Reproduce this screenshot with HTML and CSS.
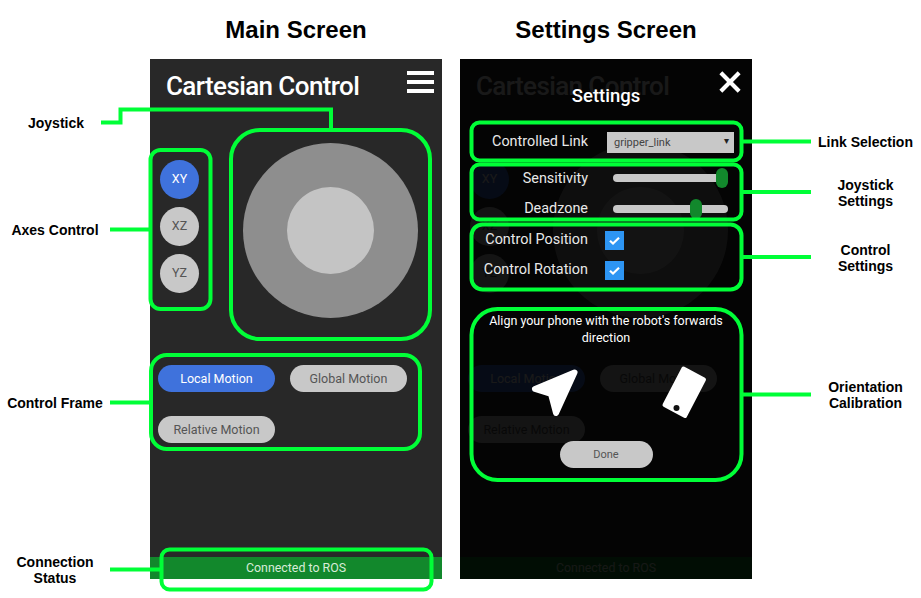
FILE: index.html
```html
<!DOCTYPE html>
<html lang="en">
<head>
<meta charset="UTF-8" />
<title>Cartesian Control screens</title>
<link rel="stylesheet" href="styles.css">
</head>
<body>
<div class="sheet">

  <div class="headings">
    <h1>Main Screen</h1>
    <h1>Settings Screen</h1>
  </div>

  <div class="phones">
    <div class="phone">
      <div class="screen">
        <div class="topbar">
          <div class="app-title">Cartesian Control</div>
          <div class="menu"><span></span><span></span><span></span></div>
        </div>
        <div class="controls">
          <div class="axes">
            <div class="axis active">XY</div>
            <div class="axis">XZ</div>
            <div class="axis">YZ</div>
          </div>
          <div class="stick"><div class="knob"></div></div>
        </div>
        <div class="frames">
          <div class="pill active">Local Motion</div>
          <div class="pill">Global Motion</div>
          <div class="pill">Relative Motion</div>
        </div>
        <div class="status">Connected to ROS</div>
      </div>
    </div>

    <div class="phone">
      <div class="screen">
        <div class="topbar">
          <div class="app-title">Cartesian Control</div>
        </div>
        <div class="controls">
          <div class="axes">
            <div class="axis active">XY</div>
            <div class="axis">XZ</div>
            <div class="axis">YZ</div>
          </div>
          <div class="stick"><div class="knob"></div></div>
        </div>
        <div class="frames">
          <div class="pill active">Local Motion</div>
          <div class="pill">Global Motion</div>
          <div class="pill">Relative Motion</div>
        </div>
        <div class="status">Connected to ROS</div>
      </div>

      <div class="settings">
        <svg class="close" viewBox="0 0 24 24"><path d="M2 2L22 22M22 2L2 22" /></svg>
        <div class="settings-title">Settings</div>

        <div class="row row-link">
          <div class="row-label">Controlled Link</div>
          <div class="select">gripper_link<span class="caret">▾</span></div>
        </div>

        <div class="row row-sens">
          <div class="row-label">Sensitivity</div>
          <div class="slider"><div class="thumb thumb-max"></div></div>
        </div>
        <div class="row row-dead">
          <div class="row-label">Deadzone</div>
          <div class="slider"><div class="thumb thumb-mid"></div></div>
        </div>

        <div class="row row-check">
          <div class="row-label">Control Position</div>
          <svg class="check" viewBox="0 0 19 19"><rect width="19" height="19" fill="#2d95f3" /><path d="M5 9.8L8 12.6L14 6.8" /></svg>
        </div>
        <div class="row row-check">
          <div class="row-label">Control Rotation</div>
          <svg class="check" viewBox="0 0 19 19"><rect width="19" height="19" fill="#2d95f3" /><path d="M5 9.8L8 12.6L14 6.8" /></svg>
        </div>

        <div class="align-text">Align your phone with the robot's forwards direction</div>
        <div class="align-icons">
          <svg class="nav-icon" viewBox="530 365 50 52">
            <path d="M574.500 371.500L535 388L551 393L556 412Z" fill="#fff" stroke="#fff" stroke-width="6" stroke-linejoin="round" />
          </svg>
          <svg class="phone-icon" viewBox="658 362 52 58">
            <path d="M683.500 367.500L704 378.500L685 415L664.500 404Z" fill="#fff" stroke="#fff" stroke-width="4" stroke-linejoin="round" />
            <circle cx="676.500" cy="407" r="3" fill="#111" />
          </svg>
        </div>
        <div class="done">Done</div>
      </div>
    </div>
  </div>

  <!-- green call-outs, drawn over both phones -->
  <svg class="callouts" viewBox="0 0 921 598">
    <rect x="231" y="130" width="199" height="209" rx="29" />
    <rect x="150.500" y="150" width="60" height="159" rx="10" />
    <rect x="151" y="355" width="269" height="94" rx="16" />
    <rect x="161.500" y="549.500" width="270" height="40" rx="8" />
    <rect x="471.500" y="122.500" width="270" height="38" rx="8" />
    <rect x="471.500" y="164.500" width="270" height="55" rx="8" />
    <rect x="471.500" y="224.500" width="270" height="65" rx="11" />
    <rect x="471.500" y="309" width="270" height="171" rx="26" />
    <path d="M101 122.500H120.500V109.500H331V130" />
    <path d="M110 229.500H150" />
    <path d="M110 402.500H151" />
    <path d="M110 569.500H161" />
    <path d="M742 141.500H811" />
    <path d="M742 192H811" />
    <path d="M742 257H811" />
    <path d="M742 394.500H811" />
  </svg>

  <div class="note left n-joystick">Joystick</div>
  <div class="note left n-axes">Axes Control</div>
  <div class="note left n-frame">Control Frame</div>
  <div class="note left n-status">Connection<br>Status</div>
  <div class="note right n-link">Link Selection</div>
  <div class="note right n-stick">Joystick<br>Settings</div>
  <div class="note right n-control">Control<br>Settings</div>
  <div class="note right n-orient">Orientation<br>Calibration</div>
</div>
</body>
</html>
```

FILE: styles.css
```css
body {
  margin: 0;
  background: #fff;
  font-family: 'Roboto', 'Liberation Sans', sans-serif;
}
.sheet {
  position: relative;
  width: 921px;
  height: 598px;
  overflow: hidden;
}
.headings {
  display: flex;
  gap: 18px;
  height: 59px;
  padding-left: 150px;
}
h1 {
  width: 292px;
  margin: 0;
  padding-top: 16px;
  font-family: 'Liberation Sans', sans-serif;
  font-size: 24px;
  line-height: 28px;
  font-weight: 700;
  text-align: center;
  color: #000;
}
.phones {
  display: flex;
  gap: 18px;
  padding-left: 150px;
}
.phone {
  position: relative;
  width: 292px;
  height: 520px;
}
.screen {
  display: flex;
  flex-direction: column;
  height: 100%;
  background: #282828;
}
.topbar {
  display: flex;
  justify-content: space-between;
  height: 84px;
  padding: 12px 8px 0 16px;
  box-sizing: border-box;
}
.app-title {
  font-size: 26px;
  line-height: 30px;
  font-weight: 500;
  letter-spacing: -0.6px;
  color: #fff;
}
.menu {
  display: flex;
  flex-direction: column;
  gap: 5px;
  width: 27px;
}
.menu span {
  height: 4px;
  background: #fff;
}
.controls {
  display: flex;
  align-items: flex-start;
  gap: 44px;
  padding-left: 10px;
}
.axes {
  display: flex;
  flex-direction: column;
  gap: 8px;
  margin-top: 17px;
}
.axis {
  display: flex;
  align-items: center;
  justify-content: center;
  width: 39px;
  height: 39px;
  padding-bottom: 2px;
  box-sizing: border-box;
  border-radius: 50%;
  background: #c8c8c8;
  font-size: 12.500px;
  color: #555;
}
.axis.active {
  background: #3f72dc;
  color: #fff;
}
.stick {
  display: flex;
  align-items: center;
  justify-content: center;
  width: 175px;
  height: 175px;
  border-radius: 50%;
  background: #8e8e8e;
}
.knob {
  width: 87px;
  height: 87px;
  border-radius: 50%;
  background: #c4c4c4;
}
.frames {
  display: grid;
  grid-template-columns: 117px 117px;
  gap: 24px 15px;
  margin-top: 47px;
  padding-left: 8px;
}
.pill {
  height: 27px;
  border-radius: 14px;
  background: #c8c8c8;
  font-size: 12.500px;
  line-height: 27px;
  text-align: center;
  color: #555;
}
.pill.active {
  background: #3f72dc;
  color: #fff;
}
.status {
  margin-top: auto;
  height: 22px;
  background: #12882c;
  font-size: 12.400px;
  line-height: 22px;
  text-align: center;
  color: #d8ecd8;
}

/* settings sheet over the main screen */
.settings {
  position: absolute;
  top: 0;
  left: 0;
  width: 100%;
  height: 100%;
  padding-top: 25px;
  box-sizing: border-box;
  background: rgb(0 0 0 / 0.9);
  color: #fff;
}
.close {
  position: absolute;
  top: 12px;
  right: 11px;
  width: 22px;
  height: 22px;
}
.close path {
  fill: none;
  stroke: #fff;
  stroke-width: 4.500;
}
.settings-title {
  font-size: 18.500px;
  line-height: 24px;
  font-weight: 500;
  text-align: center;
}
.row {
  display: flex;
  align-items: center;
  height: 30px;
}
.row-label {
  width: 128px;
  flex-shrink: 0;
  font-size: 14.400px;
  text-align: right;
  color: #e8e8e8;
}
.row-link {
  margin-top: 19px;
}
.row-link .row-label {
  margin-top: -1px;
}
.row-check .row-label {
  margin-top: -1px;
}
.row-sens {
  margin-top: 6px;
}
.row-dead {
  margin-top: 1px;
}
.row-dead + .row-check {
  margin-top: 1px;
}
.row-dead .row-label {
  margin-top: -1px;
}
.select {
  position: relative;
  width: 127px;
  height: 21px;
  margin-left: 19px;
  padding-left: 7px;
  box-sizing: border-box;
  background: #c8c8c8;
  font-size: 11px;
  line-height: 21px;
  color: #444;
}
.caret {
  position: absolute;
  right: 5px;
  top: -2px;
  font-family: 'DejaVu Sans', sans-serif;
  font-size: 10px;
  color: #222;
}
.slider {
  position: relative;
  width: 115px;
  height: 8px;
  margin-left: 25px;
  border-radius: 4px;
  background: #c8c8c8;
}
.thumb {
  position: absolute;
  top: -6px;
  width: 12px;
  height: 20px;
  border-radius: 6px;
  background: #12882c;
}
.thumb-max {
  right: 0;
}
.thumb-mid {
  left: 77px;
}
.check {
  width: 19px;
  height: 19px;
  margin-left: 17px;
}
.check path {
  fill: none;
  stroke: #fff;
  stroke-width: 2.200;
}
.align-text {
  width: 250px;
  margin: 27px auto 0;
  font-size: 12.500px;
  line-height: 17px;
  text-align: center;
}
.align-icons {
  display: flex;
  align-items: flex-start;
  height: 52px;
  margin-top: 20px;
  padding-left: 70px;
}
.nav-icon {
  width: 50px;
  height: 52px;
}
.phone-icon {
  width: 52px;
  height: 58px;
  margin-left: 78px;
  margin-top: -3px;
}
.done {
  width: 93px;
  height: 27px;
  margin: 23px auto 0;
  border-radius: 14px;
  background: #c8c8c8;
  font-size: 11px;
  line-height: 28px;
  text-align: center;
  color: #555;
}

/* annotations */
.callouts {
  position: absolute;
  top: 0;
  left: 0;
  width: 921px;
  height: 598px;
  fill: none;
  stroke: #00ff37;
  stroke-width: 4;
}
.note {
  position: absolute;
  font-family: 'Liberation Sans', sans-serif;
  font-size: 14px;
  line-height: 16px;
  font-weight: 700;
  text-align: center;
  color: #000;
}
.left {
  left: 0;
  width: 110px;
}
.right {
  left: 810px;
  width: 111px;
}
.n-joystick { top: 115px; left: 1px; }
.n-axes { top: 222px; }
.n-frame { top: 395px; }
.n-status { top: 554px; }
.n-link { top: 134px; }
.n-stick { top: 177px; }
.n-control { top: 242px; }
.n-orient { top: 379px; }
```
